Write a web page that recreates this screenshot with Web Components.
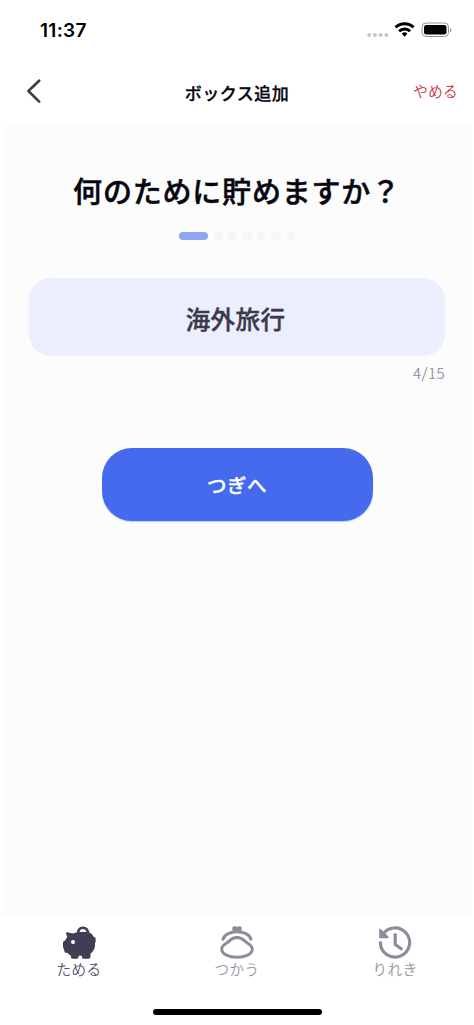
<!DOCTYPE html>
<html lang="ja">
<head>
<meta charset="utf-8">
<title>ボックス追加</title>
<style>
body{margin:0;background:#fff;font-family:"Noto Sans CJK JP",sans-serif;color:#07060f}
</style>
</head>
<body>
<app-screen></app-screen>
<script>
const define = (name, html) => {
  const t = document.createElement('template');
  t.innerHTML = html;
  customElements.define(name, class extends HTMLElement {
    constructor() {
      super();
      this.attachShadow({mode: 'open'}).append(t.content.cloneNode(true));
    }
  });
};

define('status-bar', `
<style>
:host{display:flex;height:60px;box-sizing:border-box;align-items:center;justify-content:space-between;padding:0 21px 0 40px;color:#000}
time{font:600 19px/24px Inter,sans-serif;letter-spacing:.3px;padding-top:2px}
svg{display:block}
</style>
<time>11:37</time>
<svg width="86" height="18" viewBox="0 0 86 18">
  <g fill="#c6c6c8"><circle cx="2.2" cy="14" r="2"/><circle cx="8" cy="14" r="2"/><circle cx="13.700" cy="14" r="2"/><circle cx="19.400" cy="14" r="2"/></g>
  <g fill="none" stroke="#000" stroke-width="2.9"><path d="M28.600 6.400a13 13 0 0 1 18 0"/><path d="M32.1 10.200a7.800 7.800 0 0 1 11 0"/></g>
  <path d="M34.800 12.700a4 4 0 0 1 5.600 0L37.600 15.700z"/>
  <rect x="55" y="2" width="26.500" height="13.500" rx="4" fill="none" stroke="#929292"/>
  <rect x="57" y="4" width="22.500" height="9.600" rx="2.300"/>
  <path d="M83 7v4.400c1.800-.7 1.800-3.700 0-4.400z" fill="#909090"/>
</svg>`);

define('nav-header', `
<style>
:host{display:grid;grid-template-columns:1fr auto 1fr;height:66px;align-items:center;box-sizing:border-box;padding:0 16px 4px 16px}
svg{display:block;margin-left:10px}
h1{margin:3px 0 0;font-size:17px;line-height:25px;font-weight:500;-webkit-text-stroke:.3px;letter-spacing:.5px}
.q{justify-self:end;color:#bf2029;font-size:14.500px;font-weight:300;-webkit-text-stroke:.2px;line-height:20px;letter-spacing:.4px}
</style>
<svg width="18" height="26" viewBox="0 0 18 26" fill="none" stroke="#3e3b4c" stroke-width="2.6" stroke-linecap="round" stroke-linejoin="round"><path d="M13.200 2.700L2.400 13l10.800 10.600"/></svg>
<h1><slot></slot></h1><span class="q"><slot name="action"></slot></span>`);

define('step-dots', `
<style>
:host{display:flex;gap:4.800px;justify-content:center}
i{width:9.700px;height:7.500px;border-radius:4px;background:#f6f6f7}
i:first-of-type{width:29.500px;background:#91a6f3}
</style><i></i><i></i><i></i><i></i><i></i><i></i><i></i>`);

define('name-field', `
<style>
:host{display:block}
.box{height:78px;border-radius:22px;background:#ebeefc;display:flex;align-items:center;justify-content:center;color:#3d394b;font-size:24.500px;font-weight:500;-webkit-text-stroke:.4px;letter-spacing:.4px;padding:3px 3px 0 0;box-sizing:border-box}
.n{text-align:right;font-size:15px;font-weight:300;-webkit-text-stroke:.15px;line-height:22px;color:#85858d;margin-top:6px;letter-spacing:.5px}
</style><div class="box"><slot></slot></div><div class="n"><slot name="count"></slot></div>`);

define('primary-button', `
<style>
:host{display:block}
button{display:block;width:271px;height:73px;margin:0 auto;padding:1px 0 0;border:0;border-radius:30px;background:#456aed;color:#fff;font:500 19.500px/28px "Noto Sans CJK JP",sans-serif;-webkit-text-stroke:.3px;letter-spacing:.5px;box-shadow:0 1px 1px #456aed55}
</style><button><slot></slot></button>`);

define('tab-item', `
<style>
:host{display:flex;flex-direction:column;align-items:center;color:#8e8c9a}
:host([active]){color:#423d53}
span{font-size:14.500px;font-weight:300;-webkit-text-stroke:.2px;line-height:20px;letter-spacing:.5px;margin-top:-2px}
</style><slot name="icon"></slot><span><slot></slot></span>`);

define('tab-bar', `
<style>
:host{display:grid;grid-template-columns:repeat(3,158px);height:109px;box-sizing:border-box;padding-top:8px;background:#fff;grid-template-rows:76px auto}
svg{display:block}
.home{grid-column:1/-1;justify-self:center;width:169px;height:6px;border-radius:3px;background:#000;margin-top:9px}
</style>
<tab-item active><svg slot="icon" width="36" height="37" viewBox="0 0 36 37"><path fill="currentColor" d="M5 9.200Q5 8 6.300 8.300L12 9.500Q15 8 19 8H27Q31 9 32.800 13L34.600 13.800V18L34 19V22Q33.500 26.500 29.500 29.800V33.300Q29 34.700 27.700 34.700H22.500Q21.200 34.700 21 33.500V31.800H17.500V33.300Q17.300 34.700 16 34.700H11.500Q10 34.700 10 33.300V31.700Q7.300 30.500 6.300 28.800H4L2 23V18L4.500 16Q5.200 14 6.300 13Z"/><path d="M17.300 10C15.500 2 28 1.300 26.800 10" fill="none" stroke="currentColor" stroke-width="2.700"/><circle cx="12" cy="18" r="2" fill="#fff"/></svg>ためる</tab-item>
<tab-item><svg slot="icon" width="36" height="37" viewBox="0 0 36 37" fill="none" stroke="currentColor" stroke-width="3" stroke-linecap="round" stroke-linejoin="round"><path d="M4 15.300C7 5.200 29 5.200 32 15.300"/><path d="M10.200 17C14.500 12.300 21.500 12.300 25.800 17C28 19.500 33.300 20.500 33.300 25C33.300 30.500 26 33.300 18 33.300S2.700 30.500 2.700 25C2.700 20.500 8 19.500 10.200 17Z"/><path d="M18 7.500H15L14.200 5Q14 2.800 16 3.200L18 4.200L20 3.200Q22 2.800 21.800 5L21 7.500Z" fill="currentColor" stroke-width="2"/></svg>つかう</tab-item>
<tab-item><svg slot="icon" width="36" height="37" viewBox="0 0 36 37" fill="none" stroke="currentColor" stroke-width="3.200" stroke-linecap="round" stroke-linejoin="round"><path d="M5.200 11.500A14.600 14.600 0 1 1 3.400 18.500"/><path d="M3.200 5.800V13.200H10.600Z" fill="currentColor" stroke-width="2"/><path d="M18.200 10.500V20.500L24.200 24.800"/></svg>りれき</tab-item>
<div class="home"></div>`);

define('app-screen', `
<style>
:host{display:flex;flex-direction:column;height:1025px;width:474px;overflow:hidden}
main{flex:1;margin:0 2px;background:#fcfcfc;box-sizing:border-box;padding:42px 27px 0}
h2{margin:0;text-align:center;font-size:29px;line-height:44px;font-weight:500;-webkit-text-stroke:.5px;letter-spacing:.800px;white-space:nowrap}
step-dots{margin:20px 0 38.500px}
primary-button{margin:64px 0 0}
</style>
<status-bar></status-bar>
<nav-header>ボックス追加<span slot="action">やめる</span></nav-header>
<main><h2>何のために貯めますか？</h2><step-dots></step-dots>
<name-field>海外旅行<span slot="count">4/15</span></name-field>
<primary-button>つぎへ</primary-button></main>
<tab-bar></tab-bar>`);
</script>
</body>
</html>
